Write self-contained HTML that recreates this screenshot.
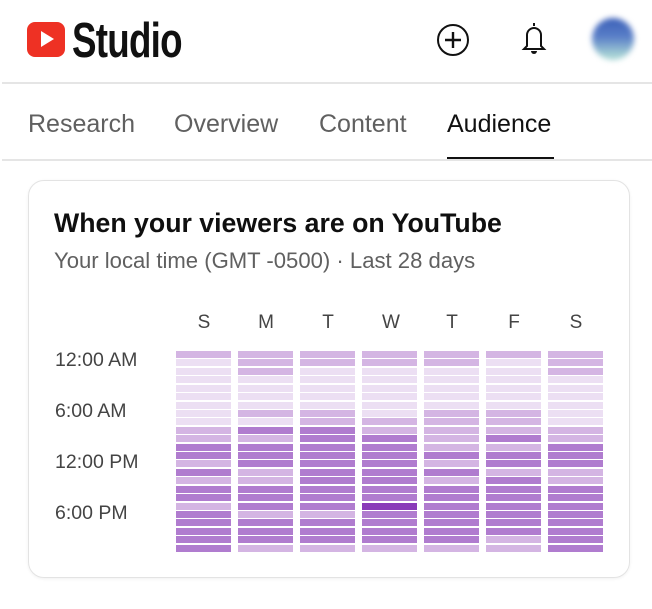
<!DOCTYPE html>
<html><head><style>
body{margin:0;width:652px;height:609px;background:#fff;font-family:"Liberation Sans",sans-serif;position:relative;overflow:hidden}
.a{position:absolute}
.tab{position:absolute;top:110px;font-size:25px;color:#606060}
.cell{position:absolute;width:55px;height:7px}
</style></head><body>
<div class="a" style="left:27px;top:22px;width:38px;height:35px;background:#ee3124;border-radius:8px"></div>
<div class="a" style="left:41px;top:31px;width:0;height:0;border-left:13px solid #fff;border-top:8px solid transparent;border-bottom:8px solid transparent"></div>
<div class="a" style="left:72px;top:13px;font-weight:bold;font-size:49px;letter-spacing:-1px;color:#111;transform:scaleX(0.75);transform-origin:left">Studio</div>
<svg class="a" style="left:436px;top:23px" width="34" height="34" viewBox="0 0 34 34"><circle cx="17" cy="17" r="15" fill="none" stroke="#111" stroke-width="2"/><path d="M17 9v16M9 17h16" stroke="#111" stroke-width="2.4"/></svg>
<svg class="a" style="left:518px;top:20px" width="32" height="36" viewBox="0 0 32 36"><path d="M16 3v3M9 26V15a7 7 0 0 1 14 0v11l3 3H6z" fill="none" stroke="#111" stroke-width="2"/><path d="M13 31a3 3 0 0 0 6 0z" fill="#111"/></svg>
<div class="a" style="left:592px;top:18px;width:42px;height:42px;border-radius:50%;background:linear-gradient(180deg,#3a5fb8 0%,#5a7fc8 45%,#a9d5d5 90%);filter:blur(3px)"></div>
<div class="a" style="left:2px;top:82px;width:650px;height:2px;background:#e5e5e5"></div>
<div class="tab" style="left:28px">Research</div>
<div class="tab" style="left:174px">Overview</div>
<div class="tab" style="left:319px">Content</div>
<div class="tab" style="left:447px;color:#111">Audience</div>
<div class="a" style="left:447px;top:157px;width:107px;height:3px;background:#111"></div>
<div class="a" style="left:2px;top:159px;width:650px;height:2px;background:#e5e5e5"></div>
<div class="a" style="left:28px;top:180px;width:600px;height:396px;border:1px solid #e3e3e3;border-radius:16px;box-shadow:0 1px 3px rgba(0,0,0,.06)"></div>
<div class="a" style="left:54px;top:208px;font-size:26.7px;font-weight:bold;color:#0f0f0f">When your viewers are on YouTube</div>
<div class="a" style="left:54px;top:248px;font-size:22.1px;color:#606060">Your local time (GMT -0500) · Last 28 days</div>
<div id="g"></div>
<script>
var days="SMTWTFS",lv=[
"100000000112212122122222",
"111000010212221122212221",
"110000011222222222212221",
"110000001122222222322221",
"110000011111212122222221",
"100000011121221222222211",
"111000000112221122222222"],col=["#ecdff3","#d4b5e3","#b07ccf","#8a3ab9"],h="";
for(var c=0;c<7;c++){var x=176+c*62;h+='<div class="a" style="left:'+(x+20)+'px;top:312px;font-size:19px;color:#444;width:16px;text-align:center">'+days[c]+'</div>';
for(var r=0;r<24;r++){h+='<div class="cell" style="left:'+x+'px;top:'+Math.round(351+r*8.42)+'px;background:'+col[+lv[c][r]]+'"></div>';}}
var t=["12:00 AM","6:00 AM","12:00 PM","6:00 PM"];
for(var i=0;i<4;i++)h+='<div class="a" style="left:55px;top:'+(349+i*51)+'px;font-size:19.5px;color:#444">'+t[i]+'</div>';
document.getElementById("g").innerHTML=h;
</script>
</body></html>
